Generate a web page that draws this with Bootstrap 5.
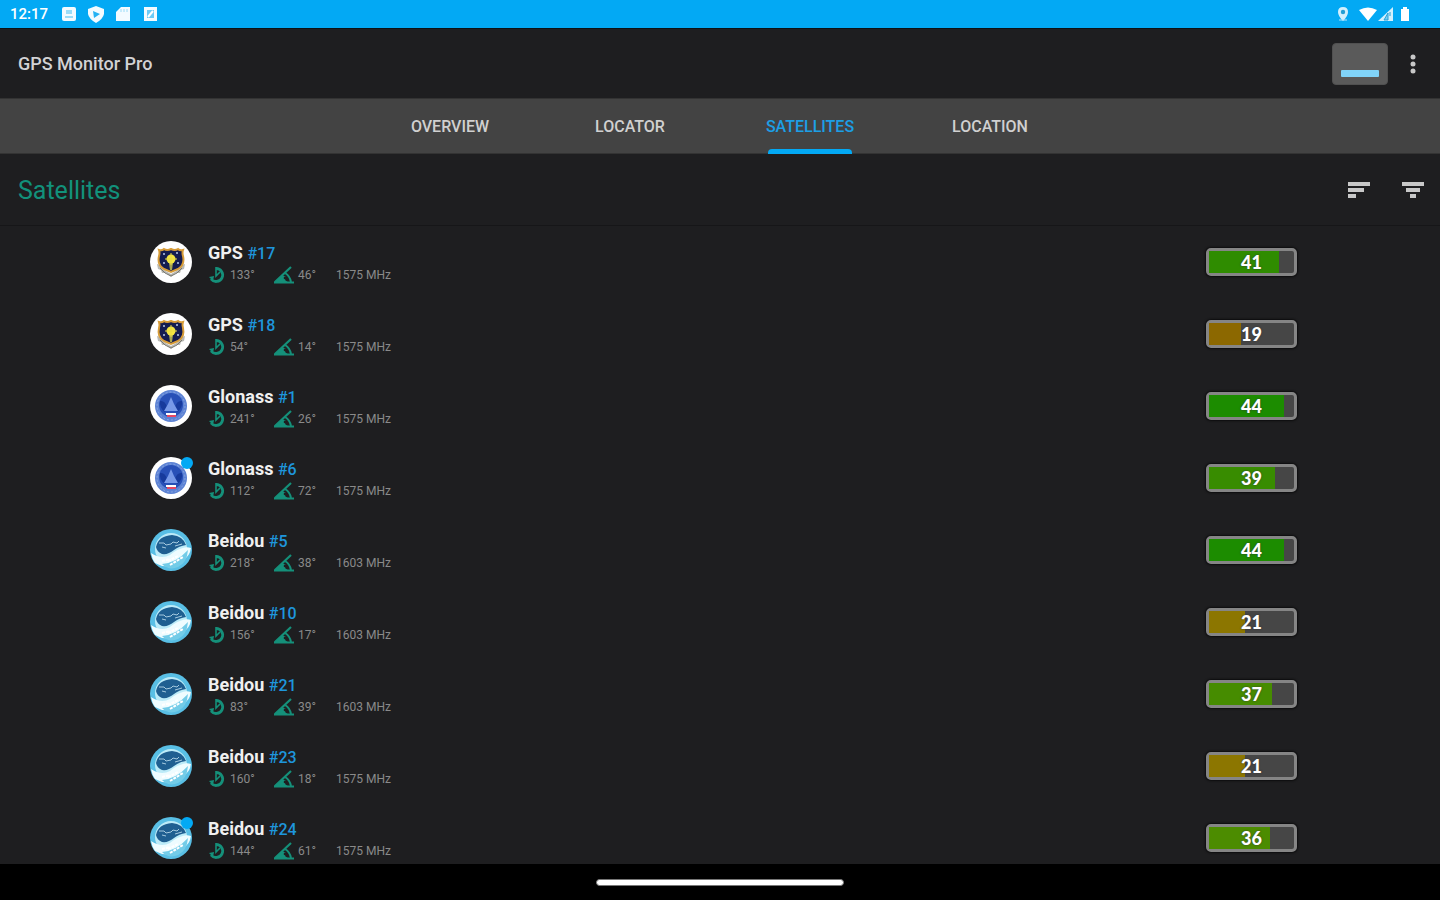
<!DOCTYPE html>
<html lang="en" data-bs-theme="dark">
<head>
<meta charset="utf-8">
<meta name="viewport" content="width=device-width, initial-scale=1">
<title>GPS Monitor Pro</title>
<link rel="stylesheet" href="https://cdn.jsdelivr.net/npm/bootstrap@5.3.0/dist/css/bootstrap.min.css">
<style>
body{font-family:Roboto,"Liberation Sans",sans-serif;background:#1e1e20;color:#e0e0e0}
svg{display:block;flex:none}
.status-bar{background:#03a9f4;height:28px;padding:0 28px 0 10px;color:#fff;font-size:15px;font-weight:500}
.status-icons{margin-left:14px}
.app-bar{height:70px;padding:0 16px 0 18px;border-top:1px solid #0c1216}
.app-title{font-size:18px;font-weight:500;line-height:24px;color:#d2d2d4}
.icon-btn{background:none;border:0;padding:0;color:#c8c8c8}
.signal-tile{width:56px;height:42px;margin-right:14px;background:#5a5a5a;border:1px solid #505050;border-radius:4px;padding:0 8px 7px}
.signal-tile span{display:block;width:100%;height:7px;background:#81d4fa;border-radius:1px}
.tab-strip{background:#434343;height:56px;border-top:1px solid #333;border-bottom:1px solid #333}
.tab-strip .nav-link{height:56px;padding:0;color:#d0d0d0;font-size:16px;font-weight:500;line-height:20px;position:relative;display:flex;align-items:center;justify-content:center}
.tab-strip .nav-link.active{color:#1c9fe6}
.tab-strip .nav-link.active::after{content:"";position:absolute;left:50%;bottom:1px;width:84px;height:5px;margin-left:-42px;border-radius:4px 4px 0 0;background:#03a9f4}
.section-bar{height:72px;padding:0 16px 0 18px;border-bottom:1px solid #161618}
.section-title{font-size:25px;font-weight:400;line-height:28px;padding-top:2px;color:#12917b}
.sort-btn{margin-right:28px}
.sat-list{min-height:0}
.sat-row{height:72px;padding:0 23px 0 30px}
.sat-text{padding-top:2px}
.sat-name{font-size:18px;line-height:22px;font-weight:700;color:#f0f0f0}
.sat-name a{color:#1e96dc;font-size:16px;font-weight:500;text-decoration:none}
.sat-meta{font-size:12px;line-height:20px;color:#8a8a8a}
.m-azimuth{width:66px}.m-elev{width:62px}
.sat-meta svg{color:#15907a}
.fresh{position:absolute;top:0;right:-1px;width:12px;height:12px;border-radius:50%;background:#03a9f4}
.level{width:91px;height:28px;border:3px solid #858585;border-radius:5px;background:#464646;position:relative;box-shadow:0 0 2px 1px #0c0c0d}
.level-value{position:absolute;inset:0;text-align:center;font-family:Lato,sans-serif;font-weight:900;font-size:18px;line-height:22px;color:#fff;text-shadow:0 0 2px #333}
.nav-bar{height:36px;background:#000}
.home-pill{width:248px;height:7px;border-radius:4px;background:#fff;border:1px solid #777}
</style>
</head>
<body>
<svg width="0" height="0" class="position-absolute" aria-hidden="true">
<defs>
<symbol id="gps" viewBox="0 0 42 42"><circle cx="21" cy="21" r="21" fill="#fff"/>
<path d="M7 23l3 1 4 5 7 4 7-4 4-5 3-1-1 5-3 1-1 3-4 0-5 4-5-4-4 0-1-3-3-1z" fill="#b9b9b4"/><path d="M10 27l5 5 6 3 6-3 5-5" fill="none" stroke="#77776f"/>
<path d="M9 9q3 1 5-1 3 2 7 0 4 2 7 0 2 2 5 1-1 3 0 6 2 9-5 13l-7 3-7-3Q7 24 9 15q1-3 0-6z" fill="#141c50" stroke="#d79c38" stroke-width="2"/>
<path d="M19 22h4l-1 7h-2z" fill="#a7a651"/><circle cx="21" cy="18" r="4.500" fill="#f4e541"/><path d="M21 12v12M15 18h12" stroke="#e6d944"/><g fill="#b8c9e8"><circle cx="14" cy="13" r="1"/><circle cx="27" cy="12" r="1"/><circle cx="14" cy="22" r="1"/><circle cx="28" cy="22" r="1"/></g></symbol>
<symbol id="glonass" viewBox="0 0 42 42"><circle cx="21" cy="21" r="21" fill="#fff"/><circle cx="21" cy="21" r="16" fill="#5d83d4"/><circle cx="21" cy="21" r="14" fill="none" stroke="#89a6e4" stroke-dasharray="2 2"/><circle cx="21" cy="20" r="12" fill="#2850b7"/><path d="M10 16q5-1 7 6l-2 5q-6-4-5-11zM32 16q-5-1-7 6l2 5q6-4 5-11z" fill="#173a9c"/><path d="M21 12l3 7 4 7H14l4-7z" fill="#7799e8"/><path d="M16 28h10v2H16z" fill="#fff"/><path d="M17 30h9v2h-9z" fill="#e34765"/></symbol>
<symbol id="beidou" viewBox="0 0 42 42"><circle cx="21" cy="21" r="21" fill="#59bfe5"/><circle cx="21" cy="20" r="16" fill="#bcebf8"/><path d="M6 18Q8 7 22 6q11 1 14 10-7 1-12 5-6 5-12 4-5-2-6-7z" fill="#1f5f91"/><path d="M9 14h5l2 2 5-1 2-2 4 1 2-2M12 18l4 1M25 17l7-2" fill="none" stroke="#a5cadf"/><path d="M1 24q10 7 19 2 6-5 10-6 6-3 11-1-1 8-8 12Q19 42 5 34q-3-4-4-10z" fill="#eefcff"/><path d="M12 35q14-1 26-14-1 13-10 17-9 4-16-3z" fill="#73cce8"/><path d="M18 32l10-5M20 36l13-8M12 32l8-2" stroke="#fff" stroke-width="2" stroke-dasharray="3 1"/></symbol>
<symbol id="az" viewBox="0 0 18 18"><path d="M8 2.500A6.500 6.500 0 1 1 3 13" fill="none" stroke="currentColor" stroke-width="2.800"/><path d="M8 1v9l4-4" fill="none" stroke="currentColor" stroke-width="1.600"/><path d="M1 11l5-1-1 5z" fill="currentColor"/></symbol>
<symbol id="el" viewBox="0 0 20 18"><path d="M0 16.500h20M1 16L17 1" fill="none" stroke="currentColor" stroke-width="2.200"/><path d="M11 7q5 3 6 9" fill="none" stroke="currentColor" stroke-width="2"/><path d="M1 16l7-7 4 2-1 3 4 3z" fill="currentColor"/><circle cx="11" cy="12" r="1.300" fill="#1e1e20"/></symbol>
</defs>
</svg>
<div class="vh-100 d-flex flex-column overflow-hidden">
<header class="status-bar d-flex align-items-center flex-shrink-0">
<span class="me-auto d-flex align-items-center"><time>12:17</time>
<svg class="status-icons" width="98" height="18" viewBox="0 0 98 18" fill="#f3fbff"><rect y="2" width="14" height="14" rx="2"/><path d="M4 5h6v4H4zM3 11h8v2H3z" fill="#9adcf8"/><path d="M34 1l8 3v5q-1 5-8 9-7-4-8-9V4z"/><path d="M31 6l7 3-6 4z" fill="#25b2f3"/><path d="M59 2h9v14H54V7z"/><path d="M59 4v3M62 4v3M65 4v3" stroke="#9adcf8"/><path d="M82 2h13v14H82z"/><path d="M85 5h7v8h-7z" fill="#6ccbf7"/><path d="M86 12l5-6" stroke="#fff" stroke-width="2"/></svg></span>
<svg width="74" height="18" viewBox="0 0 74 18" fill="#fff"><path d="M5 2q5 0 5 5 0 4-5 9-5-5-5-9 0-5 5-5z" fill="#d3f0fd"/><circle cx="5" cy="7" r="2.200" fill="#259fd4"/><path d="M1 15h8" stroke="#b3e5fc"/><path d="M21 5q9-5 18 0l-9 11z"/><path d="M55 2v14H40z" fill="#d3f0fd"/><path d="M50 8v7h-4zM52 7v4" stroke="#289fd4" fill="#73cdf5"/><path d="M63 4h2V2h4v2h2v12h-8z"/></svg>
</header>
<div class="app-bar d-flex align-items-center flex-shrink-0">
<h1 class="app-title mb-0 me-auto">GPS Monitor Pro</h1>
<button class="icon-btn signal-tile d-flex align-items-end" aria-label="Signal"><span></span></button>
<button class="icon-btn" aria-label="More"><svg width="22" height="24" viewBox="0 0 22 24" fill="currentColor"><circle cx="11" cy="5" r="2.500"/><circle cx="11" cy="12" r="2.500"/><circle cx="11" cy="19" r="2.500"/></svg></button>
</div>
<nav class="tab-strip flex-shrink-0"><div class="row g-0 justify-content-center"><div class="col-6"><div class="row g-0">
<a class="nav-link col" href="#overview">OVERVIEW</a><a class="nav-link col" href="#locator">LOCATOR</a><a class="nav-link col active" href="#satellites" aria-current="page">SATELLITES</a><a class="nav-link col" href="#location">LOCATION</a>
</div></div></div></nav>
<div class="section-bar d-flex align-items-center flex-shrink-0">
<h2 class="section-title mb-0 me-auto">Satellites</h2>
<button class="icon-btn sort-btn" aria-label="Sort"><svg width="26" height="24" viewBox="0 0 26 24" fill="currentColor"><path d="M0 4h22v4H0zM0 10h16v4H0zM0 16h8v4H0z"/></svg></button>
<button class="icon-btn" aria-label="Filter"><svg width="22" height="24" viewBox="0 0 22 24" fill="currentColor"><path d="M0 4h22v4H0zM4 10h14v4H4zM8 16h6v4H8z"/></svg></button>
</div>
<main class="sat-list flex-fill overflow-hidden"><div class="row g-0 justify-content-center"><ul class="col-10 list-unstyled mb-0" id="satellites"></ul></div></main>
<footer class="nav-bar d-flex align-items-center justify-content-center flex-shrink-0"><div class="home-pill"></div></footer>
</div>
<script src="https://cdn.jsdelivr.net/npm/bootstrap@5.3.0/dist/js/bootstrap.bundle.min.js"></script>
<script>
// system, number, azimuth, elevation, MHz, signal level, level colour, newly seen
const satellites = [
["GPS",17,133,46,1575,41,"#2f8c00",false],
["GPS",18,54,14,1575,19,"#8c6800",false],
["Glonass",1,241,26,1575,44,"#1c8c00",false],
["Glonass",6,112,72,1575,39,"#388c00",true],
["Beidou",5,218,38,1603,44,"#1c8c00",false],
["Beidou",10,156,17,1603,21,"#8c7600",false],
["Beidou",21,83,39,1603,37,"#468c00",false],
["Beidou",23,160,18,1575,21,"#8c7600",false],
["Beidou",24,144,61,1575,36,"#4c8c00",true]
];
document.getElementById("satellites").innerHTML = satellites.map(([sys,num,az,el,mhz,level,color,fresh]) => `
<li class="sat-row d-flex align-items-center">
<div class="position-relative me-3"><svg width="42" height="42"><use href="#${sys.toLowerCase()}"/></svg>${fresh ? '<span class="fresh"></span>' : ''}</div>
<div class="sat-text me-auto"><div class="sat-name">${sys} <a href="#sat-${num}">#${num}</a></div>
<div class="sat-meta d-flex"><span class="m-azimuth d-flex align-items-center gap-1"><svg width="18" height="18"><use href="#az"/></svg>${az}°</span><span class="m-elev d-flex align-items-center gap-1"><svg width="20" height="18"><use href="#el"/></svg>${el}°</span><span>${mhz} MHz</span></div></div>
<div class="level"><div class="h-100" style="width:${level*2}%;background:${color}"></div><span class="level-value">${level}</span></div>
</li>`).join("");
</script>
</body>
</html>
